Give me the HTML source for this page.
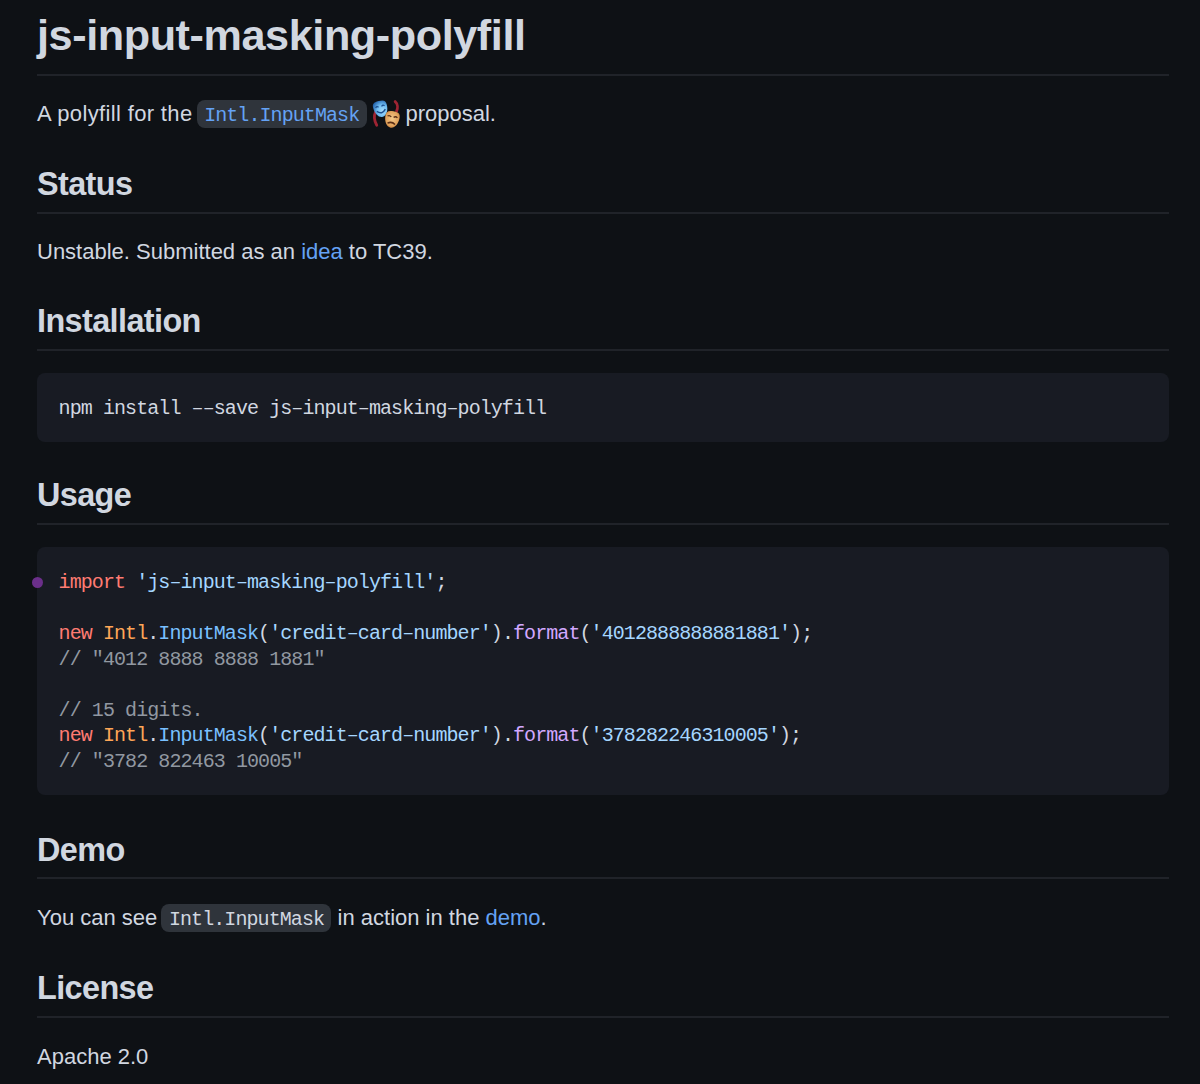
<!DOCTYPE html>
<html><head><meta charset="utf-8">
<style>
html,body{margin:0;padding:0;background:#0e1115;width:1200px;height:1084px;overflow:hidden;}
.md{position:absolute;left:37px;top:8px;width:1132px;color:#d1d7e0;font-family:"Liberation Sans",sans-serif;font-size:22px;line-height:32.4px;}
h1,h2{margin:0;font-weight:bold;color:#d1d7e0;border-bottom:2px solid #202329;}
h1{font-size:43.2px;line-height:54px;padding-bottom:12px;margin-bottom:21.6px;letter-spacing:-0.42px;}
h2{font-size:32.4px;line-height:40.5px;padding-top:1.5px;padding-bottom:7.2px;margin-top:32.4px;margin-bottom:21.6px;letter-spacing:-0.6px;}
p{margin:0 0 21.6px 0;position:relative;top:2px;}
a{color:#64a2f4;text-decoration:none;}
code{font-family:"Liberation Mono",monospace;font-size:20px;line-height:1;letter-spacing:-0.92px;margin-left:-2px;background:#2f343b;border-radius:8px;padding:4.3px 7.4px 1px 7.5px;}
code.lnk{color:#64a2f4;}
pre{margin:0 0 21.6px 0;background:#181b23;border-radius:8px;padding:23.1px 21.6px 20.1px 21.6px;font-family:"Liberation Mono",monospace;font-size:20px;letter-spacing:-0.92px;line-height:25.6px;color:#d1d7e0;white-space:pre;}
.k{color:#ff7b72}.c{color:#ffa657}.f{color:#79c0ff}.s{color:#a5d6ff}.m{color:#9198a1}.p{color:#d2a8ff}
.dot{position:absolute;left:31.6px;top:576.5px;width:11.6px;height:11.6px;border-radius:50%;background:#6b2f8a;}
.emo{display:inline-block;width:26.5px;height:28px;vertical-align:-6.5px;overflow:visible;}
</style></head><body>
<div class="md">
<h1>js-input-masking-polyfill</h1>
<p style="top:0.5px"><span style="letter-spacing:0.35px">A polyfill for the</span> <code class="lnk">Intl.InputMask</code> <svg class="emo" viewBox="0.05 0.2 26.5 28">
<defs>
<radialGradient id="gb" cx="0.6" cy="0.65" r="0.75"><stop offset="0" stop-color="#a6dcfb"/><stop offset="0.5" stop-color="#70bdf2"/><stop offset="1" stop-color="#1f5ea8"/></radialGradient>
<radialGradient id="go" cx="0.5" cy="0.45" r="0.65"><stop offset="0" stop-color="#f3c98a"/><stop offset="0.65" stop-color="#e2a35c"/><stop offset="1" stop-color="#b8702f"/></radialGradient>
</defs>
<path d="M2.6,12 C0.8,16 1.2,21 3.8,25.5" stroke="#9e2433" stroke-width="2.8" fill="none" stroke-linecap="round"/>
<path d="M22.2,1.8 C25,4.2 25,8.5 23.6,11.6" stroke="#9e2433" stroke-width="2.8" fill="none" stroke-linecap="round"/>
<g transform="translate(7.7,9) rotate(-15)">
<path d="M0,-8 C5.5,-8 7,-6.5 7,-2.5 C7,3.5 4,8.3 0,8.3 C-4,8.3 -7,3.5 -7,-2.5 C-7,-6.5 -5.5,-8 0,-8 Z" fill="url(#gb)"/>
<path d="M-4.6,-2 Q-3.1,-4 -1.6,-2 M1.6,-2 Q3.1,-4 4.6,-2" stroke="#1d4f90" stroke-width="1.3" fill="none"/>
<path d="M-4.4,1.6 Q0,6.4 4.4,1.6" stroke="#1d4f90" stroke-width="1.5" fill="none"/>
</g>
<g transform="translate(19.1,19.5) rotate(10)">
<path d="M0,-8.2 C5.6,-8.2 7.2,-6.6 7.2,-2.5 C7.2,3.6 4.1,8.5 0,8.5 C-4.1,8.5 -7.2,3.6 -7.2,-2.5 C-7.2,-6.6 -5.6,-8.2 0,-8.2 Z" fill="url(#go)"/>
<path d="M-5,-2.4 Q-3.2,-4 -1.2,-2.2 M1.2,-2.2 Q3.2,-4 5,-2.4" stroke="#5a2d14" stroke-width="1.3" fill="none"/>
<path d="M-3.8,4.6 Q0,1.8 3.8,4.6" stroke="#5a2d14" stroke-width="1.5" fill="none"/>
</g>
</svg> proposal.</p>
<h2>Status</h2>
<p style="top:1.3px">Unstable. Submitted as an <a>idea</a> to TC39.</p>
<h2>Installation</h2>
<pre>npm install &#8211;&#8211;save js&#8211;input&#8211;masking&#8211;polyfill</pre>
<h2>Usage</h2>
<pre><span class="k">import</span> <span class="s">'js&#8211;input&#8211;masking&#8211;polyfill'</span>;

<span class="k">new</span> <span class="c">Intl</span>.<span class="f">InputMask</span>(<span class="s">'credit&#8211;card&#8211;number'</span>).<span class="p">format</span>(<span class="s">'4012888888881881'</span>);
<span class="m">// "4012 8888 8888 1881"</span>

<span class="m">// 15 digits.</span>
<span class="k">new</span> <span class="c">Intl</span>.<span class="f">InputMask</span>(<span class="s">'credit&#8211;card&#8211;number'</span>).<span class="p">format</span>(<span class="s">'378282246310005'</span>);
<span class="m">// "3782 822463 10005"</span></pre>
<h2 style="margin-top:33.4px">Demo</h2>
<p style="line-height:33.4px;top:0.5px">You can see <code>Intl.InputMask</code> in action in the <a>demo</a>.</p>
<h2>License</h2>
<p>Apache 2.0</p>
</div>
<div class="dot"></div>
</body></html>
